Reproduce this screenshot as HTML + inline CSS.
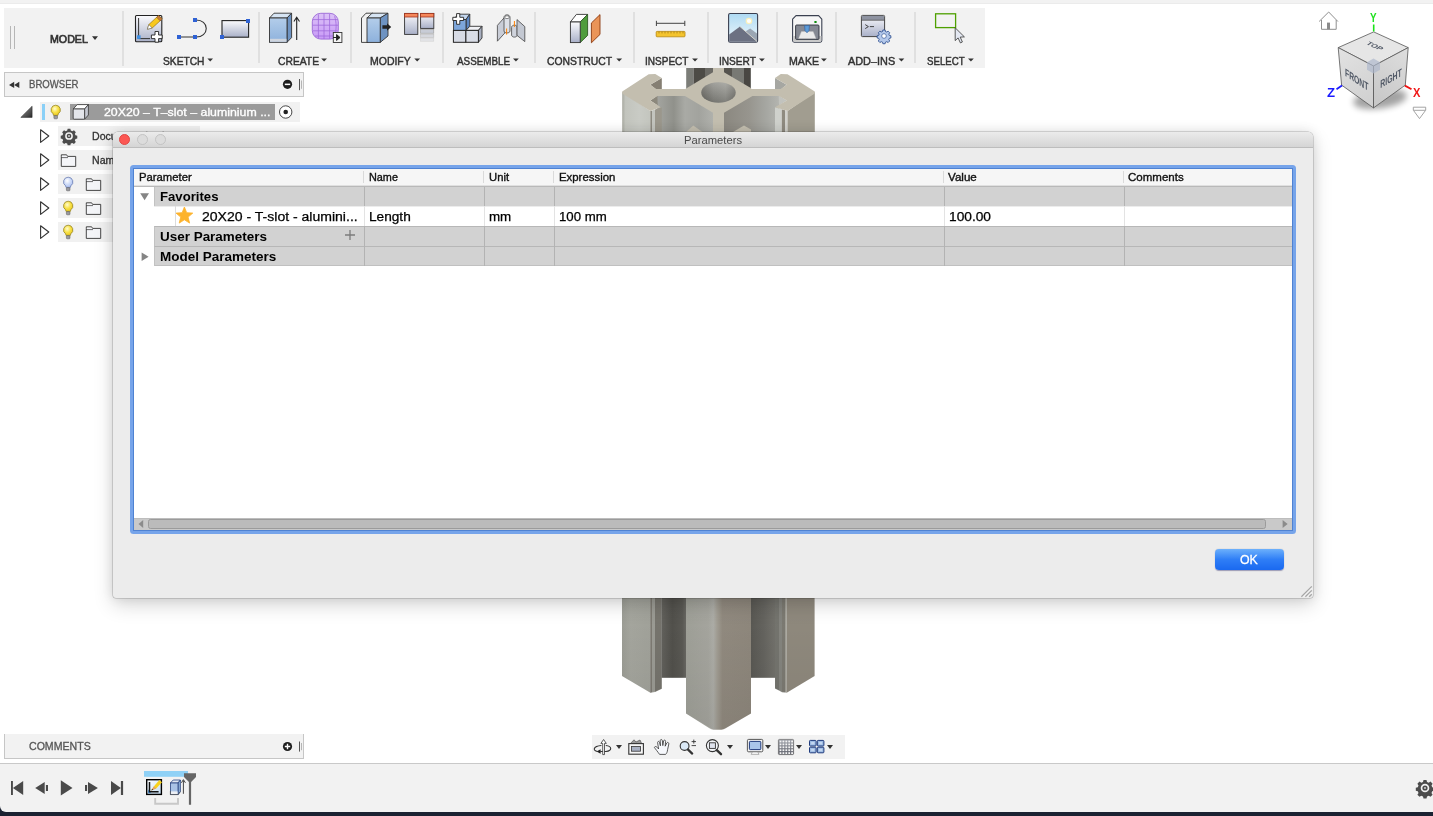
<!DOCTYPE html>
<html><head><meta charset="utf-8"><title>Parameters</title>
<style>
html,body{margin:0;padding:0;}
body{width:1433px;height:816px;position:relative;overflow:hidden;background:#fff;font-family:"Liberation Sans",sans-serif;}
.abs{position:absolute;}
.t{position:absolute;white-space:nowrap;line-height:1;transform-origin:0 0;}
#topstrip{left:0;top:0;width:1433px;height:3px;background:#f2f2f2;border-bottom:1px solid #ebebeb;}
#toolbar{left:4px;top:8px;width:981px;height:60px;background:#f2f2f2;}
.sep{position:absolute;top:12px;width:2px;height:51px;background:#e0e0e0;}
#brhead{left:4px;top:72px;width:298px;height:23px;background:#f2f2f2;border:1px solid #c6c6c6;}
.rowbg{position:absolute;background:#f1f1f1;}
#comments{left:4px;top:734px;width:298px;height:24px;background:#f2f2f2;border:1px solid #c6c6c6;border-top:none;}
#navbar{left:592px;top:735px;width:253px;height:24px;background:#f2f2f2;}
#timeline{left:0;top:763px;width:1433px;height:49px;background:#f2f2f2;border-top:1px solid #c9c9c9;border-bottom-left-radius:6px;box-sizing:border-box;}
#darkstrip{left:0;top:800px;width:1433px;height:16px;background:#1b2232;}
#dialog{left:113px;top:132px;width:1200px;height:466px;background:#ececec;border-radius:5px 5px 3px 3px;box-shadow:0 0 0 0.5px rgba(0,0,0,0.26),0 7px 20px rgba(0,0,0,0.16),0 0 12px rgba(0,0,0,0.10);overflow:hidden;}
#titlebar{left:0;top:0;width:1200px;height:15px;background:linear-gradient(#ebebeb,#d5d5d5);border-bottom:1px solid #bdbdbd;}
.tl{position:absolute;top:2px;width:10px;height:10px;border-radius:50%;box-sizing:border-box;}
#ring{left:17px;top:33px;width:1166px;height:369px;background:#76a4ea;border-radius:3.5px;}
#table{left:21px;top:37px;width:1158px;height:361px;background:#fff;box-shadow:0 0 0 1px #4f82d2;overflow:hidden;}
#thead{left:0;top:0;width:1158px;height:16px;background:#f6f6f6;}
.grow{position:absolute;left:20px;width:1138px;height:20px;background:#d2d2d2;border-top:1px solid #b7b7b7;border-left:1px solid #c2c2c2;box-sizing:border-box;}
.vl{position:absolute;width:1px;}
#ok{left:1102px;top:417px;width:69px;height:21px;border-radius:4px;background:linear-gradient(#6cb0fb,#2f7ef6 50%,#1a69f0);box-shadow:0 0.5px 1px rgba(0,0,80,0.35);}
</style></head><body>
<div class="abs" id="topstrip"></div>
<div class="abs" id="toolbar"></div>
<div class="sep" style="left:122px;top:11px;height:55px"></div>
<div class="sep" style="left:258px"></div>
<div class="sep" style="left:350px"></div>
<div class="sep" style="left:442px"></div>
<div class="sep" style="left:534px"></div>
<div class="sep" style="left:633px"></div>
<div class="sep" style="left:707px"></div>
<div class="sep" style="left:776px"></div>
<div class="sep" style="left:835px"></div>
<div class="sep" style="left:914px"></div>
<div class="abs" style="left:10px;top:26px;width:1px;height:23px;background:#b6b6b6"></div>
<div class="abs" style="left:14px;top:26px;width:1px;height:23px;background:#b6b6b6"></div>
<div class="abs" id="brhead"></div>
<div class="rowbg" style="left:40px;top:102px;width:260px;height:20px"></div>
<div class="abs" style="left:42px;top:104px;width:3px;height:16px;background:#8ad0f7"></div>
<div class="abs" style="left:70px;top:104px;width:205px;height:16px;background:#9b9b9b"></div>
<div class="rowbg" style="left:58px;top:126px;width:142px;height:20px"></div>
<div class="rowbg" style="left:58px;top:150px;width:142px;height:20px"></div>
<div class="rowbg" style="left:58px;top:174px;width:142px;height:20px"></div>
<div class="rowbg" style="left:58px;top:198px;width:142px;height:20px"></div>
<div class="rowbg" style="left:58px;top:222px;width:142px;height:20px"></div>
<div class="abs" id="comments"></div>
<div class="abs" id="navbar"></div>
<div class="abs" id="darkstrip"></div>
<div class="abs" id="timeline"></div>
<svg class="abs" style="left:0;top:0" width="1433" height="816" viewBox="0 0 1433 816">
<defs>
<linearGradient id="gLface" x1="622" x2="651" y1="0" y2="0" gradientUnits="userSpaceOnUse"><stop offset="0" stop-color="#a7a89f"/><stop offset="0.12" stop-color="#c2c4bd"/><stop offset="0.6" stop-color="#c9cbc5"/><stop offset="1" stop-color="#c3c5be"/></linearGradient>
<linearGradient id="gLcav" x1="657" x2="713" y1="0" y2="0" gradientUnits="userSpaceOnUse"><stop offset="0" stop-color="#a4a5a0"/><stop offset="0.3" stop-color="#90918b"/><stop offset="0.5" stop-color="#a9aaa5"/><stop offset="0.75" stop-color="#a2a39e"/><stop offset="1" stop-color="#b0b1ac"/></linearGradient>
<linearGradient id="gRcav" x1="724" x2="779.5" y1="0" y2="0" gradientUnits="userSpaceOnUse"><stop offset="0" stop-color="#8b8880"/><stop offset="0.45" stop-color="#97958e"/><stop offset="0.75" stop-color="#a5a6a1"/><stop offset="1" stop-color="#b4b5b0"/></linearGradient>
<linearGradient id="gHole" x1="701" x2="736" y1="0" y2="0" gradientUnits="userSpaceOnUse"><stop offset="0" stop-color="#6d6c66"/><stop offset="0.35" stop-color="#8e8e88"/><stop offset="0.7" stop-color="#9a9a94"/><stop offset="1" stop-color="#7a7973"/></linearGradient>
<linearGradient id="gHoleV" x1="0" x2="0" y1="82" y2="103" gradientUnits="userSpaceOnUse"><stop offset="0" stop-color="#fff" stop-opacity="0.18"/><stop offset="1" stop-color="#000" stop-opacity="0.18"/></linearGradient>
<linearGradient id="gCol" x1="686" x2="751" y1="0" y2="0" gradientUnits="userSpaceOnUse"><stop offset="0" stop-color="#a0a199"/><stop offset="0.34" stop-color="#a6a69f"/><stop offset="0.42" stop-color="#aeaea8"/><stop offset="0.48" stop-color="#a29e94"/><stop offset="0.56" stop-color="#928b80"/><stop offset="1" stop-color="#8f887d"/></linearGradient>
<linearGradient id="gLface2" x1="622" x2="651" y1="0" y2="0" gradientUnits="userSpaceOnUse"><stop offset="0" stop-color="#9d9e96"/><stop offset="0.3" stop-color="#a6a79f"/><stop offset="1" stop-color="#a2a39b"/></linearGradient>
<linearGradient id="gLcav2" x1="661" x2="686" y1="0" y2="0" gradientUnits="userSpaceOnUse"><stop offset="0" stop-color="#64635e"/><stop offset="0.45" stop-color="#52514c"/><stop offset="0.85" stop-color="#5a5954"/><stop offset="1" stop-color="#696863"/></linearGradient>
<linearGradient id="gRcav2" x1="751" x2="776" y1="0" y2="0" gradientUnits="userSpaceOnUse"><stop offset="0" stop-color="#5a5954"/><stop offset="0.5" stop-color="#65645f"/><stop offset="1" stop-color="#74736d"/></linearGradient>
<linearGradient id="gShade" x1="0" x2="0" y1="598" y2="730" gradientUnits="userSpaceOnUse"><stop offset="0" stop-color="#000" stop-opacity="0"/><stop offset="1" stop-color="#000" stop-opacity="0.07"/></linearGradient>
<linearGradient id="gCubeL" x1="1338" x2="1373" y1="47" y2="107" gradientUnits="userSpaceOnUse"><stop offset="0" stop-color="#e2e2e2"/><stop offset="1" stop-color="#cfcfcf"/></linearGradient>
<linearGradient id="gCubeR" x1="1408" x2="1373" y1="47" y2="107" gradientUnits="userSpaceOnUse"><stop offset="0" stop-color="#dedede"/><stop offset="1" stop-color="#c6c6c6"/></linearGradient>
<filter id="blur3" x="-50%" y="-50%" width="200%" height="200%"><feGaussianBlur stdDeviation="3.2"/></filter>
</defs>
<!-- ===== 3D model top part ===== -->
<g>
<!-- dark cavities behind hub -->
<rect x="686.2" y="68" width="7.3" height="22" fill="#7c7d78"/>
<rect x="693.5" y="68" width="11.5" height="22" fill="#4d4b46"/>
<rect x="705" y="68" width="8.5" height="22" fill="#6b6a65"/>
<rect x="723.5" y="68" width="8.5" height="22" fill="#55534e"/>
<rect x="732" y="68" width="12" height="22" fill="#787974"/>
<rect x="744" y="68" width="6.8" height="22" fill="#494743"/>
<!-- left face -->
<polygon points="622.2,92 650.3,111 650.3,133 622.2,133" fill="url(#gLface)"/>
<!-- left cavity -->
<rect x="657" y="95" width="56.5" height="38" fill="url(#gLcav)"/>
<!-- right cavity -->
<rect x="723.5" y="95" width="56" height="38" fill="url(#gRcav)"/>
<!-- lip strips left -->
<polygon points="650.3,111 652,110.4 652,133 650.3,133" fill="#8d8a80"/>
<polygon points="652,110.4 655,109.4 655,133 652,133" fill="#c3c4be"/>
<polygon points="655,109.4 660.8,107.3 661.8,107.8 661.8,133 655,133" fill="#9b978c"/>
<!-- right lip strips -->
<polygon points="775,107.3 781.8,109.3 781.8,133 775,133" fill="#cfd1cc"/>
<polygon points="781.8,109.3 785,110.3 785,133 781.8,133" fill="#8f8b80"/>
<polygon points="785,110.3 787.5,111 787.5,133 785,133" fill="#d2d2cd"/>
<!-- right face -->
<polygon points="787.5,111 814.8,92 814.8,133 787.5,133" fill="#a19d90"/>
<!-- notches -->
<polygon points="661.8,78.1 661.8,89.5 656.2,89.5 650.3,84.8" fill="#857f73"/>
<polygon points="650.3,100.6 657.4,95.5 657.7,105.5" fill="#8c887c"/>
<polygon points="775,78.1 775,89.5 780.8,89.5 786.7,84.8" fill="#a6a7a2"/>
<polygon points="778.7,95.5 786.7,100.6 779,105.5" fill="#c2c3be"/>
<!-- small lower lip tops -->
<polygon points="686,132 693.3,125.6 702.5,132" fill="#c3beaf"/>
<polygon points="733,132 744,125.6 751,129.5 751,132" fill="#c3beaf"/>
<!-- top face -->
<path fill="#c3beaf" fill-rule="evenodd" d="M622.2,91.4 L648.7,74.3 L655.3,73.9 L661.8,78.1 L650.3,84.8 L656.2,88.9 L685.3,88.9 L713,72.2 L713,68 L724,68 L724,72.2 L750.8,88.1 L751.5,88.9 L780.8,88.9 L786.7,84.8 L775,78.1 L780.8,73.9 L787.5,74.3 L814.8,91.4 L814.8,93.5 L787.5,111 L775,107.3 L786.7,100.6 L778.7,96 L752.5,96 L724,112.7 L724,133 L713,133 L713,112.7 L685,96 L657.4,96 L650.3,100.6 L660.8,107.3 L650.3,111 L622.2,93.5 Z"/>
<ellipse cx="718.5" cy="92.5" rx="17.2" ry="10.2" fill="url(#gHole)"/>
<ellipse cx="718.5" cy="92.5" rx="17.2" ry="10.2" fill="url(#gHoleV)"/>
</g>
<!-- ===== 3D model bottom part ===== -->
<g>
<polygon points="622,597 650.4,597 650.4,692.7 622,676" fill="url(#gLface2)"/>
<polygon points="650.2,597 652,597 652,692.5 650.2,692.7" fill="#7e7b73"/>
<polygon points="652,597 655,597 655,692 652,692.5" fill="#9c9c95"/>
<polygon points="655,597 661.8,597 661.8,688.8 655,692" fill="#77756e"/>
<rect x="661.6" y="597" width="24.6" height="80.8" fill="url(#gLcav2)"/>
<rect x="751" y="597" width="24.6" height="80.8" fill="url(#gRcav2)"/>
<path d="M686,597 H751 V713.6 L725.6,728.3 Q723.4,729.7 721.4,729.7 H713.4 Q711.4,729.7 709.4,728.3 L686,713.6 Z" fill="url(#gCol)"/>
<polygon points="775,597 779,597 779,690.6 775,688.4" fill="#75756f"/>
<polygon points="779,597 782,597 782,692.2 779,690.6" fill="#85857f"/>
<polygon points="782,597 785,597 785,692.6 782,692.2" fill="#7d7b73"/>
<polygon points="785,597 786.7,597 786.7,692.7 785,692.6" fill="#a09e95"/>
<polygon points="786.7,597 814.6,597 814.6,676 786.7,692.7" fill="#908a7e"/>
<polygon points="622,597 814.6,597 814.6,676 786.7,692.7 775.5,688.3 775.5,677.8 751,677.8 751,713.6 724,729.6 713,729.6 686,713.6 686,677.8 661.6,677.8 661.6,688.3 650.4,692.7 622,676" fill="url(#gShade)"/>
</g>
<!-- ===== View cube ===== -->
<g>
<ellipse cx="1380" cy="99" rx="27" ry="9.5" fill="#000" opacity="0.36" filter="url(#blur3)" transform="rotate(-8 1380 99)"/>
<polygon points="1373.7,31.9 1408.2,47.6 1373.5,66 1338.2,47.6" fill="#e6e6e6" stroke="#555" stroke-width="0.8" stroke-linejoin="round"/>
<polygon points="1338.2,47.6 1373.5,66 1373.5,107.9 1341.6,85.1" fill="url(#gCubeL)" stroke="#555" stroke-width="0.8" stroke-linejoin="round"/>
<polygon points="1373.5,66 1408.2,47.6 1405.3,85.1 1373.5,107.9" fill="url(#gCubeR)" stroke="#555" stroke-width="0.8" stroke-linejoin="round"/>
<polygon points="1373.5,58.5 1380,62.2 1380,69.8 1373.5,73.5 1367,69.8 1367,62.2" fill="#aeb8cc" opacity="0.7"/>
<g font-family="Liberation Sans, sans-serif" font-weight="bold" fill="#4a5260" opacity="0.96">
<text transform="translate(1365.5,44) rotate(24) skewX(-32) scale(1,0.72)" font-size="8">TOP</text>
<text transform="translate(1345,75.8) skewY(33) scale(0.62,1)" font-size="11">FRONT</text>
<text transform="translate(1380.3,88.3) skewY(-30) scale(0.63,1)" font-size="11">RIGHT</text>
</g>
<!-- axes -->
<line x1="1373.7" y1="24.5" x2="1373.7" y2="31.5" stroke="#19e219" stroke-width="1.6"/>
<line x1="1336.5" y1="89.3" x2="1342" y2="85.6" stroke="#1a1aff" stroke-width="1.8"/>
<line x1="1404.9" y1="85.6" x2="1411.5" y2="89.3" stroke="#f01010" stroke-width="1.8"/>
<!-- home -->
<path d="M1319.1,21.5 L1328.7,12 L1337.9,21.5 M1321.5,20 V29.3 H1336.2 V20" fill="none" stroke="#8e8e8e" stroke-width="1"/>
<rect x="1327" y="22.6" width="3" height="6.7" fill="#8a8a8a"/>
<!-- dropdown -->
<path d="M1413.3,107.2 H1425.7 V110.3 H1413.3 Z M1413.6,110.6 L1419.5,118.6 L1425.4,110.6" fill="#fff" stroke="#9a9a9a" stroke-width="0.9"/>
</g>
<defs>
<linearGradient id="gPanel" x1="0" x2="0" y1="0" y2="1"><stop offset="0" stop-color="#fbfbfd"/><stop offset="1" stop-color="#a9b0c8"/></linearGradient>
<linearGradient id="gSky" x1="0" x2="0" y1="0" y2="1"><stop offset="0" stop-color="#aedaf3"/><stop offset="1" stop-color="#f0f8fc"/></linearGradient>
<linearGradient id="gForm" x1="0" x2="0" y1="0" y2="1"><stop offset="0" stop-color="#dcc2f7"/><stop offset="1" stop-color="#c89af7"/></linearGradient>
<linearGradient id="gBlueF" x1="0" x2="0" y1="0" y2="1"><stop offset="0" stop-color="#b3cdea"/><stop offset="1" stop-color="#8db1dc"/></linearGradient>
<linearGradient id="gTri" x1="0" x2="1" y1="0" y2="1"><stop offset="0" stop-color="#9a9a9a"/><stop offset="1" stop-color="#2a2a2a"/></linearGradient>
<radialGradient id="gBulbY" cx="0.4" cy="0.35" r="0.7"><stop offset="0" stop-color="#fffbd0"/><stop offset="0.5" stop-color="#f8e24a"/><stop offset="1" stop-color="#e8c51a"/></radialGradient>
<radialGradient id="gBulbB" cx="0.4" cy="0.35" r="0.7"><stop offset="0" stop-color="#ffffff"/><stop offset="0.5" stop-color="#cfdcf8"/><stop offset="1" stop-color="#a9bdf0"/></radialGradient>
</defs>
<!-- dropdown arrows -->
<g fill="#333">
<polygon points="92,36.2 98,36.2 95,40"/>
<polygon points="207.4,58.4 213,58.4 210.2,61.6"/>
<polygon points="321.2,58.4 327,58.4 324.1,61.6"/>
<polygon points="414.3,58.4 420.1,58.4 417.2,61.6"/>
<polygon points="513,58.4 518.8,58.4 515.9,61.6"/>
<polygon points="616.3,58.4 622.1,58.4 619.2,61.6"/>
<polygon points="692.1,58.4 697.9,58.4 695,61.6"/>
<polygon points="759,58.4 764.8,58.4 761.9,61.6"/>
<polygon points="821,58.4 826.8,58.4 823.9,61.6"/>
<polygon points="898.5,58.4 904.3,58.4 901.4,61.6"/>
<polygon points="968,58.4 973.8,58.4 970.9,61.6"/>
</g>
<!-- SKETCH: create sketch -->
<rect x="135.5" y="15.5" width="26.3" height="26.3" rx="1" fill="url(#gPanel)" stroke="#222" stroke-width="1.1"/>
<path d="M138.6,18 V38.6 H150" fill="none" stroke="#333" stroke-width="1"/>
<rect x="137" y="35.3" width="3.6" height="3.6" fill="#3f8fe2"/>
<path d="M147.4,29.2 L148.8,24.6 L158.6,15.4 L162.2,19 L152.2,28 Z" fill="#f7c81e" stroke="#8a6512" stroke-width="0.6"/>
<path d="M156.6,17.3 L158.6,15.4 L162.2,19 L160.2,20.9 Z" fill="#c47a3c" stroke="#7a4a1c" stroke-width="0.5"/>
<path d="M147.4,29.2 L148.8,24.6 L152.2,28 Z" fill="#fff" stroke="#555" stroke-width="0.5"/>
<path d="M155,31.5 H158.6 V35 H162.2 V38.6 H158.6 V42.2 H155 V38.6 H151.4 V35 H155 Z" fill="#fff" stroke="#222" stroke-width="0.9"/>
<!-- arc -->
<path d="M179,37 H195 M195,20 C210,19 210,38 195,37" fill="none" stroke="#333" stroke-width="1.1"/>
<rect x="177" y="35" width="4" height="4" fill="#2f62d4"/><rect x="193" y="35" width="4" height="4" fill="#2f62d4"/><rect x="193" y="18" width="4" height="4" fill="#2f62d4"/>
<!-- rectangle -->
<rect x="222" y="20.6" width="26.6" height="16.6" fill="url(#gPanel)" stroke="#222" stroke-width="1.1"/>
<rect x="246" y="19" width="4" height="4" fill="#2f62d4"/><rect x="220" y="35" width="4" height="4" fill="#2f62d4"/>
<!-- CREATE: extrude -->
<polygon points="269.5,18 274,13.2 291.6,13.2 287,18" fill="#d6e4f3" stroke="#333" stroke-width="0.9" stroke-linejoin="round"/>
<polygon points="287,18 291.6,13.2 291.6,37.6 287,42.3" fill="#6e93c2" stroke="#333" stroke-width="0.9" stroke-linejoin="round"/>
<rect x="269.5" y="18" width="17.5" height="24.3" fill="url(#gBlueF)" stroke="#333" stroke-width="0.9"/>
<rect x="270" y="38.8" width="16.5" height="3" fill="#cfd5df"/>
<path d="M296.7,40 V18 M293.9,21.5 L296.7,17.3 L299.5,21.5" fill="none" stroke="#222" stroke-width="1.1"/>
<!-- form -->
<rect x="312.3" y="13.3" width="26" height="25.8" rx="8.5" fill="url(#gForm)" stroke="#9a68d6" stroke-width="0.9"/>
<path d="M312.8,19.6 H337.8 M312.6,25.2 H338 M312.8,30.8 H337.8 M315,36 H335.6 M318.4,14.4 V38.4 M324,13.6 V39 M329.6,13.8 V38.8 M334.6,16.2 C336.6,22 336.6,30 334.6,36.6" stroke="#a06adc" stroke-width="0.8" fill="none"/>
<rect x="333.3" y="32.5" width="8.6" height="10" fill="#f4f4f4" stroke="#333" stroke-width="0.9"/>
<path d="M333,37.5 H338 M336.6,34.6 L340,37.5 L336.6,40.4 Z" fill="#222" stroke="#222" stroke-width="1"/>
<!-- MODIFY 1 press pull -->
<polygon points="361.5,18 366,13.2 373,13.2 368,18 368,42.4 361.5,42.4" fill="#f1f1f1" stroke="#333" stroke-width="0.9" stroke-linejoin="round"/>
<polygon points="367,18 372,13.2 388,13.2 380.2,18" fill="#d6e4f3" stroke="#333" stroke-width="0.9" stroke-linejoin="round"/>
<polygon points="380.2,18 388,13.2 388,36 380.2,42.4" fill="#6e93c2" stroke="#333" stroke-width="0.9" stroke-linejoin="round"/>
<rect x="367" y="18" width="13.2" height="24.4" fill="url(#gBlueF)" stroke="#333" stroke-width="0.9"/>
<path d="M382.4,25.2 H387 V23.2 L391.2,27 L387,30.8 V28.8 H382.4 Z" fill="#222"/>
<!-- MODIFY 2 -->
<rect x="404.6" y="13.4" width="13.2" height="21" fill="url(#gPanel)" stroke="#333" stroke-width="0.9"/>
<rect x="404.6" y="13.4" width="13.2" height="3.6" fill="#f5875a" stroke="#a3321c" stroke-width="0.8"/>
<rect x="420.6" y="13.4" width="13.2" height="15" fill="url(#gPanel)" stroke="#333" stroke-width="0.9"/>
<rect x="420.6" y="13.4" width="13.2" height="3.6" fill="#f5875a" stroke="#a3321c" stroke-width="0.8"/>
<rect x="420.6" y="29.6" width="13.2" height="3.6" fill="#c8ccd6" stroke="#999" stroke-width="0.6"/>
<rect x="420.6" y="34.2" width="13.2" height="3.2" fill="#d6d8de" stroke="#bbb" stroke-width="0.6"/>
<rect x="420.6" y="38.2" width="13.2" height="3" fill="#e2e3e6" stroke="#d0d0d0" stroke-width="0.5"/>
<!-- ASSEMBLE 1 -->
<polygon points="453.6,19.5 458,14.2 469.8,14.2 466,19.5" fill="#c3d6ee" stroke="#333" stroke-width="0.9" stroke-linejoin="round"/>
<polygon points="466,19.5 469.8,14.2 469.8,26 466,30.4" fill="#5c86c2" stroke="#333" stroke-width="0.9" stroke-linejoin="round"/>
<rect x="453.6" y="19.5" width="12.4" height="10.9" fill="#7da6db" stroke="#333" stroke-width="0.9"/>
<polygon points="466,30.4 469.8,26.3 482,26.3 478.4,30.4" fill="#f0f1f5" stroke="#333" stroke-width="0.9" stroke-linejoin="round"/>
<polygon points="478.4,30.4 482,26.3 482,38 478.4,42.3" fill="#a8afc0" stroke="#333" stroke-width="0.9" stroke-linejoin="round"/>
<rect x="453.4" y="30.4" width="12.5" height="11.9" fill="#d7dbe5" stroke="#222" stroke-width="1"/>
<rect x="465.9" y="30.4" width="12.5" height="11.9" fill="#d9dde7" stroke="#222" stroke-width="1"/>
<path d="M456.6,13.6 H459.8 V17.3 H463.6 V20.5 H459.8 V24.3 H456.6 V20.5 H452.8 V17.3 H456.6 Z" fill="#fff" stroke="#222" stroke-width="0.9"/>
<!-- ASSEMBLE 2 joint -->
<polygon points="497.4,25.4 504.8,17 504.8,33 497.4,41.2" fill="#c9cdd7" stroke="#444" stroke-width="0.8" stroke-linejoin="round"/>
<path d="M504,17.4 C504,14 510,14 510,17.4 V31 C510,33.6 504,33.6 504,31 Z" fill="#dde0e7" stroke="#444" stroke-width="0.8"/>
<ellipse cx="507" cy="17.2" rx="2.2" ry="1.4" fill="#fff" stroke="#444" stroke-width="0.6"/>
<path d="M511.6,27.4 C511.6,24.4 517.2,24.4 517.2,27.4 V35 C517.2,37.8 511.6,37.8 511.6,35 Z" fill="#cfd3dc" stroke="#444" stroke-width="0.8"/>
<polygon points="517,19.6 524.8,26.6 524.8,41.6 517,35.4" fill="#c3c8d2" stroke="#444" stroke-width="0.8" stroke-linejoin="round"/>
<path d="M506.6,28.5 V34.6 M514.4,21 V27" stroke="#ff8000" stroke-width="1"/>
<!-- CONSTRUCT -->
<polygon points="570.4,22 576.4,14.4 587.6,14.4 580.2,22" fill="#fff" stroke="#333" stroke-width="0.9" stroke-linejoin="round"/>
<polygon points="580.2,22 587.6,14.4 587.6,35.4 580.2,42.6" fill="#4f9c3d" stroke="#2c5a22" stroke-width="0.9" stroke-linejoin="round"/>
<rect x="570.4" y="22" width="9.8" height="20.6" fill="url(#gPanel)" stroke="#333" stroke-width="0.9"/>
<polygon points="591.4,23 600,14.6 600,34.4 591.4,42.8" fill="#ea9458" stroke="#8c3a10" stroke-width="0.9" stroke-linejoin="round"/>
<!-- INSPECT -->
<path d="M656.4,23.3 H684.8 M656.4,20.8 V26 M684.8,20.8 V26" stroke="#444" stroke-width="1" fill="none"/>
<rect x="656.2" y="31.4" width="28.8" height="5.4" rx="0.8" fill="#f4c42e" stroke="#b8870c" stroke-width="0.8"/>
<path d="M659,31.6 V33.4 M662,31.6 V33.4 M665,31.6 V33.4 M668,31.6 V33.4 M671,31.6 V33.4 M674,31.6 V33.4 M677,31.6 V33.4 M680,31.6 V33.4 M683,31.6 V33.4" stroke="#8a6408" stroke-width="0.6"/>
<!-- INSERT -->
<rect x="728.6" y="13.5" width="29" height="28.8" rx="1.5" fill="url(#gSky)" stroke="#3a3f50" stroke-width="1.1"/>
<polygon points="743,33 750.2,28.4 757,33.6 757,41.6 750,41.6" fill="#9ba6b3"/>
<polygon points="729.2,41.8 729.2,34.6 740,26.6 757,41.4 757,41.8" fill="#6c7182"/>
<path d="M740,26.6 L757,41.4" stroke="#e8e4d8" stroke-width="0.8"/>
<circle cx="749" cy="21" r="3.3" fill="#fbf1bd"/><circle cx="749" cy="21" r="2.1" fill="#fff"/>
<!-- MAKE -->
<path d="M796,15.6 H818.6 L821.8,19.2 V40.6 Q821.8,42.2 820.2,42.2 H794.2 Q792.6,42.2 792.6,40.6 V19.2 Z" fill="#f6f6f6" stroke="#3a4050" stroke-width="1.1" stroke-linejoin="round"/>
<path d="M793,36 V40.6 Q793,41.8 794.2,41.8 H820.2 Q821.4,41.8 821.4,40.6 V36 Z" fill="#c9c9c9"/>
<rect x="795.6" y="25" width="23.4" height="14.4" rx="1" fill="#858993" stroke="#2e323c" stroke-width="0.9"/>
<polygon points="798.6,38.6 801.4,31.6 813.2,31.6 816,38.6" fill="#ebebeb" stroke="#bbb" stroke-width="0.4"/>
<polygon points="804.6,25.6 809.4,25.6 809,30.6 807,32.8 805,30.6" fill="#5c9bd8" stroke="#2c5c9c" stroke-width="0.6"/>
<rect x="814.4" y="21" width="2.2" height="2" fill="#0a8c0a"/>
<!-- ADD-INS -->
<rect x="861.4" y="15.4" width="23.2" height="21.2" rx="1" fill="url(#gPanel)" stroke="#444" stroke-width="1"/>
<rect x="861.9" y="15.9" width="22.2" height="4" fill="#8e93a1"/>
<path d="M861.4,20.2 H884.6" stroke="#444" stroke-width="0.8"/>
<path d="M865.2,24.6 L868.4,26.6 L865.2,28.6 M869.8,26.6 H874" stroke="#333" stroke-width="0.9" fill="none"/>
<g transform="translate(884,36) scale(0.86)">
<path d="M-1.3,-7 h2.6 l0.4,1.8 l1.5,0.6 l1.6,-1 l1.8,1.8 l-1,1.6 l0.6,1.5 l1.8,0.4 v2.6 l-1.8,0.4 l-0.6,1.5 l1,1.6 l-1.8,1.8 l-1.6,-1 l-1.5,0.6 l-0.4,1.8 h-2.6 l-0.4,-1.8 l-1.5,-0.6 l-1.6,1 l-1.8,-1.8 l1,-1.6 l-0.6,-1.5 l-1.8,-0.4 v-2.6 l1.8,-0.4 l0.6,-1.5 l-1,-1.6 l1.8,-1.8 l1.6,1 l1.5,-0.6 Z" fill="#b4c8ea" stroke="#274a8c" stroke-width="0.95" stroke-linejoin="round"/>
<circle r="2.7" fill="#fff" stroke="#274a8c" stroke-width="0.7"/>
</g>
<!-- SELECT -->
<rect x="935.6" y="13.8" width="20" height="13.8" fill="none" stroke="#4ea000" stroke-width="1.3"/>
<path d="M955.2,27.8 L955.2,40.6 L958.1,37.9 L960.4,42.9 L962.4,42 L960.2,37.1 L964.4,36.9 Z" fill="#e4e8f2" stroke="#333" stroke-width="0.8" stroke-linejoin="round"/>
<!-- BROWSER header icons -->
<polygon points="9,84.9 14.2,81.7 14.2,88.1" fill="#333"/><polygon points="14.1,84.9 19.3,81.7 19.3,88.1" fill="#333"/>
<circle cx="287.5" cy="84.3" r="4.6" fill="#1e1e1e"/><rect x="284.8" y="83.6" width="5.4" height="1.5" fill="#fff"/>
<path d="M299.5,79 V90.2" stroke="#555" stroke-width="1"/><path d="M301.5,80.5 V88.8" stroke="#b5b5b5" stroke-width="1"/>
<!-- COMMENTS icons -->
<circle cx="287.5" cy="746.5" r="4.6" fill="#1e1e1e"/><path d="M284.8,746.5 H290.2 M287.5,743.8 V749.2" stroke="#fff" stroke-width="1.4"/>
<path d="M299.5,741.5 V751.6" stroke="#555" stroke-width="1"/><path d="M301.5,743 V750.2" stroke="#b5b5b5" stroke-width="1"/>
<!-- root row -->
<polygon points="20.8,117.4 32.1,117.4 32.1,106.2" fill="url(#gTri)" stroke="#222" stroke-width="0.5"/>
<g id="bulbY"><path d="M55.7,105.2 a4.7,4.7 0 0 1 2.6,8.6 l-0.4,1.6 h-4.4 l-0.4,-1.6 a4.7,4.7 0 0 1 2.6,-8.6 Z" fill="url(#gBulbY)" stroke="#8b7a1e" stroke-width="0.7"/><rect x="53.9" y="115.6" width="3.6" height="3.2" rx="0.8" fill="#9a9aa0" stroke="#555" stroke-width="0.5"/></g>
<polygon points="73.2,109 77.2,104.6 88.4,104.6 84.6,109" fill="#fff" stroke="#333" stroke-width="0.8" stroke-linejoin="round"/>
<polygon points="84.6,109 88.4,104.6 88.4,115 84.6,119.2" fill="#c6c9d2" stroke="#333" stroke-width="0.8" stroke-linejoin="round"/>
<rect x="73.2" y="109" width="11.4" height="10.2" rx="1" fill="#e3e5ea" stroke="#333" stroke-width="0.8"/>
<circle cx="285.7" cy="112" r="6.2" fill="#fff" stroke="#333" stroke-width="0.9"/><circle cx="285.7" cy="112" r="2.3" fill="#222"/>
<!-- child expand triangles -->
<g fill="#fff" stroke="#333" stroke-width="1.1" stroke-linejoin="round">
<polygon points="40.6,129.8 48.8,136 40.6,142.4"/>
<polygon points="40.6,153.8 48.8,160 40.6,166.4"/>
<polygon points="40.6,177.8 48.8,184 40.6,190.4"/>
<polygon points="40.6,201.8 48.8,208 40.6,214.4"/>
<polygon points="40.6,225.8 48.8,232 40.6,238.4"/>
</g>
<!-- gear doc settings -->
<g transform="translate(69,136) scale(0.9)">
<path d="M-1.5,-8 h3 l0.5,2 l1.7,0.7 l1.8,-1.1 l2.1,2.1 l-1.1,1.8 l0.7,1.7 l2,0.5 v3 l-2,0.5 l-0.7,1.7 l1.1,1.8 l-2.1,2.1 l-1.8,-1.1 l-1.7,0.7 l-0.5,2 h-3 l-0.5,-2 l-1.7,-0.7 l-1.8,1.1 l-2.1,-2.1 l1.1,-1.8 l-0.7,-1.7 l-2,-0.5 v-3 l2,-0.5 l0.7,-1.7 l-1.1,-1.8 l2.1,-2.1 l1.8,1.1 l1.7,-0.7 Z" fill="#4c4c4c"/>
<circle r="4.3" fill="#f1f1f1"/><circle r="2.6" fill="#4c4c4c"/><circle r="1.1" fill="#c8c8c8"/>
</g>
<!-- folders -->
<g id="fold1"><path d="M61.3,156.4 V166.4 H75.7 V156.4 H67.6 L66.6,154.8 H61.3 Z" fill="#f4f5f8" stroke="#333" stroke-width="0.9" stroke-linejoin="round"/><path d="M61.3,157.6 H68" stroke="#333" stroke-width="0.7"/></g>
<use href="#fold1" x="25" y="24"/>
<use href="#fold1" x="25" y="48"/>
<use href="#fold1" x="25" y="72"/>
<!-- bulbs -->
<g transform="translate(12.5,72)"><path d="M55.7,105.2 a4.7,4.7 0 0 1 2.6,8.6 l-0.4,1.6 h-4.4 l-0.4,-1.6 a4.7,4.7 0 0 1 2.6,-8.6 Z" fill="url(#gBulbB)" stroke="#5a6fa8" stroke-width="0.7"/><rect x="53.9" y="115.6" width="3.6" height="3.2" rx="0.8" fill="#9a9aa0" stroke="#555" stroke-width="0.5"/></g>
<use href="#bulbY" x="12.5" y="96"/>
<use href="#bulbY" x="12.5" y="120"/>
<!-- NAV bar icons -->
<g stroke="#333" fill="none" stroke-width="1.1">
<path d="M601.4,745.5 C592.6,746.2 592.8,750.8 597.4,751.5 M605.8,745.5 C612.2,746.2 612.4,750.6 606,751.5 H600.4"/>
<polygon points="596.6,751.5 600.6,749.3 600.6,753.7" fill="#222" stroke="none"/>
<path d="M602.7,754.6 V743.4 H600.9 L603.6,739.5 L606.3,743.4 H604.5 V754.6 Z" fill="#fff" stroke-width="0.8"/>
</g>
<g fill="#333"><polygon points="616,745 622,745 619,748.9"/><polygon points="727,745 733,745 730,748.9"/><polygon points="765,745 771,745 768,748.9"/><polygon points="796,745 802,745 799,748.9"/><polygon points="827,745 833,745 830,748.9"/></g>
<path d="M630.5,743.4 L634,739.8 L636,742 L640,740 L641.6,743.4" fill="#999" stroke="#555" stroke-width="0.7"/>
<rect x="628.8" y="743.6" width="14.6" height="10.6" fill="#f6f6f6" stroke="#333" stroke-width="1.1"/>
<rect x="631.6" y="746.6" width="9" height="4.6" fill="#a8b0c2" stroke="#333" stroke-width="0.8"/>
<path d="M659.6,754.4 C657.6,751.6 655.4,749 654.4,747.4 C654.8,746.2 656.2,746.4 657,747.2 L658.6,749 L657.6,742.6 C657.4,741.2 659.2,741 659.6,742.4 L660.4,745.8 L660.2,740.6 C660.2,739.2 662.2,739.2 662.4,740.6 L662.8,745.6 L663.6,741 C663.8,739.6 665.8,740 665.6,741.4 L665.2,746.2 L666.8,743 C667.4,741.8 669.2,742.6 668.8,744 L667.6,749.6 C667.4,752 666.6,753.4 665.6,754.4 Z" fill="#f6f8fc" stroke="#333" stroke-width="0.8" stroke-linejoin="round"/>
<circle cx="684.6" cy="746" r="4.4" fill="#dbe9f6" stroke="#333" stroke-width="1.1"/>
<path d="M687.8,749.4 L692.2,753.6" stroke="#333" stroke-width="2.2" stroke-linecap="round"/>
<path d="M691.6,741.6 H696 M693.8,739.6 V743.6 M691.6,745.6 H696" stroke="#333" stroke-width="0.9"/>
<circle cx="712.4" cy="745.6" r="6" fill="#f4f6fa" stroke="#333" stroke-width="1.1"/>
<rect x="709.4" y="742.8" width="6" height="5.6" fill="#dfe3ee" stroke="#333" stroke-width="0.9"/>
<path d="M716.8,750.2 L721,754.2" stroke="#333" stroke-width="2.4" stroke-linecap="round"/>
<rect x="747.4" y="739.4" width="15.4" height="12.4" rx="1.2" fill="#f4f4f4" stroke="#444" stroke-width="0.9"/>
<rect x="749.4" y="741.4" width="11.4" height="8.2" rx="0.8" fill="#a9c5ea" stroke="#1f3a7c" stroke-width="1"/>
<path d="M752.4,752 H757.8 L759,754.4 H751.2 Z" fill="#f8f8f8" stroke="#888" stroke-width="0.6"/>
<linearGradient id="gGrid" x1="0" x2="0" y1="0" y2="1"><stop offset="0" stop-color="#a2a5ad"/><stop offset="1" stop-color="#5b5e68"/></linearGradient><rect x="778.4" y="739.4" width="15.2" height="15.2" rx="1" fill="url(#gGrid)" stroke="#555" stroke-width="0.6"/>
<g fill="#f4f4f4"><rect x="779.6" y="740.6" width="1.8" height="1.8"/><rect x="782.5" y="740.6" width="1.8" height="1.8"/><rect x="785.4" y="740.6" width="1.8" height="1.8"/><rect x="788.3" y="740.6" width="1.8" height="1.8"/><rect x="791.2" y="740.6" width="1.8" height="1.8"/>
<rect x="779.6" y="743.5" width="1.8" height="1.8"/><rect x="782.5" y="743.5" width="1.8" height="1.8"/><rect x="785.4" y="743.5" width="1.8" height="1.8"/><rect x="788.3" y="743.5" width="1.8" height="1.8"/><rect x="791.2" y="743.5" width="1.8" height="1.8"/>
<rect x="779.6" y="746.4" width="1.8" height="1.8"/><rect x="782.5" y="746.4" width="1.8" height="1.8"/><rect x="785.4" y="746.4" width="1.8" height="1.8"/><rect x="788.3" y="746.4" width="1.8" height="1.8"/><rect x="791.2" y="746.4" width="1.8" height="1.8"/>
<rect x="779.6" y="749.3" width="1.8" height="1.8"/><rect x="782.5" y="749.3" width="1.8" height="1.8"/><rect x="785.4" y="749.3" width="1.8" height="1.8"/><rect x="788.3" y="749.3" width="1.8" height="1.8"/><rect x="791.2" y="749.3" width="1.8" height="1.8"/>
<rect x="779.6" y="752.2" width="1.8" height="1.8"/><rect x="782.5" y="752.2" width="1.8" height="1.8"/><rect x="785.4" y="752.2" width="1.8" height="1.8"/><rect x="788.3" y="752.2" width="1.8" height="1.8"/><rect x="791.2" y="752.2" width="1.8" height="1.8"/></g>
<g fill="#9dbbe3" stroke="#1f3a7c" stroke-width="1"><rect x="809.5" y="740.4" width="6.6" height="5.6" rx="0.8"/><rect x="817.3" y="740.4" width="6.6" height="5.6" rx="0.8"/><rect x="809.5" y="747.2" width="6.6" height="5.6" rx="0.8"/><rect x="817.3" y="747.2" width="6.6" height="5.6" rx="0.8"/></g>
<g fill="#c3d6f0"><rect x="811.2" y="742" width="3.2" height="2.4"/><rect x="819" y="742" width="3.2" height="2.4"/><rect x="811.2" y="748.8" width="3.2" height="2.4"/><rect x="819" y="748.8" width="3.2" height="2.4"/></g>
<!-- TIMELINE -->
<g fill="#4a4a4a">
<rect x="11" y="781" width="1.9" height="14"/><polygon points="12.9,788 23.2,781 23.2,795"/>
<polygon points="35.2,788 44.7,782 44.7,794"/><rect x="45.9" y="785" width="2.1" height="6"/>
<polygon points="60.8,780.2 72.5,788 60.8,795.6"/>
<rect x="85" y="785" width="2.1" height="6"/><polygon points="88,782 97.9,788 88,794"/>
<polygon points="111,781 120.9,788 111,795"/><rect x="120.9" y="781" width="2.2" height="14"/>
</g>
<rect x="144" y="771" width="44" height="5.8" fill="#8fd1f6"/>
<linearGradient id="gSk" x1="0" x2="1" y1="0" y2="1"><stop offset="0" stop-color="#ffffff"/><stop offset="1" stop-color="#c4dcf2"/></linearGradient>
<rect x="146.7" y="779.7" width="14.7" height="14.7" fill="url(#gSk)" stroke="#000" stroke-width="1.4"/>
<polygon points="148,789.4 151.4,793.2 148,793.2" fill="#4f96dc"/>
<path d="M149.5,782 V791.7 H158.6" fill="none" stroke="#111" stroke-width="1.5"/>
<path d="M151.2,790.6 L153.8,786.4 L159.4,779.9 L162,782.2 L156.2,788.4 Z" fill="#f9d21c"/>
<path d="M151.2,790.6 L153.8,786.4 L156.2,788.4 Z" fill="#e0a070"/>
<path d="M151.2,790.6 L152.2,788.9 L153.2,789.8 Z" fill="#222"/>
<polygon points="170.4,783 173.2,780 180.4,780 178,783" fill="#dfe8f4" stroke="#2a4580" stroke-width="0.8" stroke-linejoin="round"/>
<polygon points="178,783 180.4,780 180.4,791.6 178,794.6" fill="#8eaed8" stroke="#2a4580" stroke-width="0.8" stroke-linejoin="round"/>
<rect x="170.4" y="783" width="7.6" height="11.6" fill="#a9c3e6" stroke="#2a4580" stroke-width="0.8"/>
<rect x="170.8" y="791.4" width="6.8" height="2.8" fill="#eceff4"/>
<path d="M170.4,791 V794.6 H178 L180.4,791.6" fill="none" stroke="#555" stroke-width="0.8"/>
<path d="M183.4,793.8 V780.4 M181.4,782.8 L183.4,779.6 L185.4,782.8" fill="none" stroke="#444" stroke-width="1"/>
<path d="M155.2,798 V803.8 H178 V798" fill="none" stroke="#c8c8c8" stroke-width="1.9"/>
<path d="M184,773.2 H196 V777 L191.1,782 V804.7 H188.9 V782 L184,777 Z" fill="#666"/>
<!-- settings gear -->
<g transform="translate(1425,788)">
<path d="M-1.5,-8 h3 l0.5,2 l1.7,0.7 l1.8,-1.1 l2.1,2.1 l-1.1,1.8 l0.7,1.7 l2,0.5 v3 l-2,0.5 l-0.7,1.7 l1.1,1.8 l-2.1,2.1 l-1.8,-1.1 l-1.7,0.7 l-0.5,2 h-3 l-0.5,-2 l-1.7,-0.7 l-1.8,1.1 l-2.1,-2.1 l1.1,-1.8 l-0.7,-1.7 l-2,-0.5 v-3 l2,-0.5 l0.7,-1.7 l-1.1,-1.8 l2.1,-2.1 l1.8,1.1 l1.7,-0.7 Z" fill="#4c4c4c"/>
<circle r="4.3" fill="#f2f2f2"/><circle r="2.6" fill="#4c4c4c"/><circle r="1.1" fill="#c8c8c8"/>
</g>
</svg>
<span class="t" style="left:49.60px;top:33.69px;font-size:11px;font-weight:normal;color:#333;transform:scaleX(0.9667);-webkit-text-stroke:0.7px #333">MODEL</span>
<span class="t" style="left:163.00px;top:55.69px;font-size:11px;font-weight:normal;color:#333;transform:scaleX(0.9290);-webkit-text-stroke:0.45px #333">SKETCH</span>
<span class="t" style="left:277.70px;top:55.69px;font-size:11px;font-weight:normal;color:#333;transform:scaleX(0.9364);-webkit-text-stroke:0.45px #333">CREATE</span>
<span class="t" style="left:369.60px;top:55.69px;font-size:11px;font-weight:normal;color:#333;transform:scaleX(0.9531);-webkit-text-stroke:0.45px #333">MODIFY</span>
<span class="t" style="left:457.00px;top:55.69px;font-size:11px;font-weight:normal;color:#333;transform:scaleX(0.8954);-webkit-text-stroke:0.45px #333">ASSEMBLE</span>
<span class="t" style="left:547.00px;top:55.69px;font-size:11px;font-weight:normal;color:#333;transform:scaleX(0.9419);-webkit-text-stroke:0.45px #333">CONSTRUCT</span>
<span class="t" style="left:644.89px;top:55.69px;font-size:11px;font-weight:normal;color:#333;transform:scaleX(0.9115);-webkit-text-stroke:0.45px #333">INSPECT</span>
<span class="t" style="left:718.58px;top:55.69px;font-size:11px;font-weight:normal;color:#333;transform:scaleX(0.9183);-webkit-text-stroke:0.45px #333">INSERT</span>
<span class="t" style="left:788.80px;top:55.69px;font-size:11px;font-weight:normal;color:#333;transform:scaleX(0.9631);-webkit-text-stroke:0.45px #333">MAKE</span>
<span class="t" style="left:847.80px;top:55.69px;font-size:11px;font-weight:normal;color:#333;transform:scaleX(0.9885);-webkit-text-stroke:0.45px #333">ADD–INS</span>
<span class="t" style="left:926.80px;top:55.69px;font-size:11px;font-weight:normal;color:#333;transform:scaleX(0.8822);-webkit-text-stroke:0.45px #333">SELECT</span>
<span class="t" style="left:29.40px;top:78.69px;font-size:11px;font-weight:normal;color:#555;transform:scaleX(0.8718);-webkit-text-stroke:0.3px #555">BROWSER</span>
<span class="t" style="left:29.30px;top:740.79px;font-size:11px;font-weight:normal;color:#555;transform:scaleX(0.9620);-webkit-text-stroke:0.3px #555">COMMENTS</span>
<span class="t" style="left:103.80px;top:107.03px;font-size:10.6px;font-weight:normal;color:#fff;transform:scaleX(1.1650);-webkit-text-stroke:0.3px #fff">20X20 – T–slot – aluminium ...</span>
<span class="t" style="left:91.60px;top:130.93px;font-size:10.6px;font-weight:normal;color:#333;transform:scaleX(1.0001);-webkit-text-stroke:0.3px #333">Document Settings</span>
<span class="t" style="left:91.60px;top:154.73px;font-size:10.6px;font-weight:normal;color:#333;transform:scaleX(1.0001);-webkit-text-stroke:0.3px #333">Named Views</span>
<span class="t" style="left:1370.30px;top:11.17px;font-size:13.5px;font-weight:bold;color:#1fe01f;transform:scaleX(0.7333);">Y</span>
<span class="t" style="left:1326.50px;top:86.17px;font-size:13.5px;font-weight:bold;color:#1a1aff;transform:scaleX(0.9750);">Z</span>
<span class="t" style="left:1412.60px;top:86.17px;font-size:13.5px;font-weight:bold;color:#f01818;transform:scaleX(0.8222);">X</span>
<div class="abs" id="dialog">
<div class="abs" id="titlebar"></div>
<div class="tl" style="left:6px;top:2.1px;width:11px;height:11px;background:#fc5753;border:0.5px solid #df4744"></div>
<div class="tl" style="left:23.8px;top:2.1px;width:11px;height:11px;background:#dcdcdc;border:0.7px solid #c3c3c3"></div>
<div class="tl" style="left:41.9px;top:2.1px;width:11px;height:11px;background:#dcdcdc;border:0.7px solid #c3c3c3"></div>
<div class="abs" id="ring"></div>
<div class="abs" id="table">
  <div class="abs" id="thead"></div>
  <div class="abs" style="left:0;top:16px;width:1158px;height:1px;background:#e0e0e0"></div>
  <div class="abs" style="left:0;top:17px;width:1158px;height:1px;background:#b9b9b9"></div>
  <div class="grow" style="top:18px;height:19px;border-top:none"></div>
  <div class="abs" style="left:20px;top:37px;width:1138px;height:1px;background:#ececec"></div>
  <div class="grow" style="top:57px"></div>
  <div class="grow" style="top:77px;border-bottom:1px solid #c0c0c0"></div>
  <!-- header col separators -->
  <div class="vl" style="left:229px;top:2px;height:12px;background:#dadada"></div>
  <div class="vl" style="left:349px;top:2px;height:12px;background:#dadada"></div>
  <div class="vl" style="left:419px;top:2px;height:12px;background:#dadada"></div>
  <div class="vl" style="left:809px;top:2px;height:12px;background:#dadada"></div>
  <div class="vl" style="left:989px;top:2px;height:12px;background:#dadada"></div>
  <!-- body col separators -->
  <div class="vl" style="left:230px;top:18px;height:79px;background:#b3b3b3"></div>
  <div class="vl" style="left:350px;top:18px;height:79px;background:#b3b3b3"></div>
  <div class="vl" style="left:420px;top:18px;height:79px;background:#b3b3b3"></div>
  <div class="vl" style="left:810px;top:18px;height:79px;background:#b3b3b3"></div>
  <div class="vl" style="left:990px;top:18px;height:79px;background:#b3b3b3"></div>
  <div class="vl" style="left:230px;top:37px;height:20px;background:#e3e3e3"></div>
  <div class="vl" style="left:350px;top:37px;height:20px;background:#e3e3e3"></div>
  <div class="vl" style="left:420px;top:37px;height:20px;background:#e3e3e3"></div>
  <div class="vl" style="left:810px;top:37px;height:20px;background:#e3e3e3"></div>
  <div class="vl" style="left:990px;top:37px;height:20px;background:#e3e3e3"></div>
  <div class="vl" style="left:40.5px;top:37px;height:20px;background:#dcdcdc"></div>
  <!-- scrollbar -->
  <div class="abs" style="left:0;top:349px;width:1158px;height:12px;background:#c9c9c9;border-top:1px solid #bdbdbd;box-sizing:border-box"></div>
  <div class="abs" style="left:14px;top:350px;width:1118px;height:10px;background:#bbbbbb;border:1px solid #9b9b9b;border-radius:2.5px;box-sizing:border-box"></div>
  <svg class="abs" style="left:0;top:0" width="1158" height="361">
    <polygon points="6.2,24.2 15,24.2 10.6,31.2" fill="#858585"/>
    <polygon points="7.6,83.4 14.6,87.7 7.6,92" fill="#858585"/>
    <path d="M211,66 H221 M216,61 V71" stroke="#7c7c7c" stroke-width="1.3"/>
    <path transform="translate(50.4,46.6)" d="M0,-8.6 L2.3,-2.9 L8.4,-2.5 L3.7,1.5 L5.2,7.5 L0,4.2 L-5.2,7.5 L-3.7,1.5 L-8.4,-2.5 L-2.3,-2.9 Z" fill="#fdb32c" stroke="#fdb32c" stroke-width="0.8" stroke-linejoin="round"/>
    <polygon points="9.2,351 4.5,355 9.2,359" fill="#8b8b8b"/>
    <polygon points="1148.6,351 1153.6,355 1148.6,359" fill="#8b8b8b"/>
  </svg>
</div>
<div class="abs" id="ok"></div>
<svg class="abs" style="left:1186px;top:452px" width="14" height="14"><path d="M12.8,2.4 L2.4,12.8 M12.8,6.4 L6.4,12.8 M12.8,10.2 L10.2,12.8" stroke="#a6a6a6" stroke-width="1.3" fill="none"/><path d="M12.8,4 L4,12.8 M12.8,8 L8,12.8" stroke="#f8f8f8" stroke-width="0.8" fill="none"/></svg>
</div>
<span class="t" style="left:683.50px;top:134.59px;font-size:11px;font-weight:normal;color:#4a4a4a;transform:scaleX(1.0200);">Parameters</span>
<span class="t" style="left:138.60px;top:171.81px;font-size:10.5px;font-weight:normal;color:#111;transform:scaleX(1.0763);-webkit-text-stroke:0.35px #111">Parameter</span>
<span class="t" style="left:368.50px;top:171.81px;font-size:10.5px;font-weight:normal;color:#111;transform:scaleX(1.0331);-webkit-text-stroke:0.35px #111">Name</span>
<span class="t" style="left:488.60px;top:171.81px;font-size:10.5px;font-weight:normal;color:#111;transform:scaleX(1.0717);-webkit-text-stroke:0.35px #111">Unit</span>
<span class="t" style="left:558.50px;top:171.81px;font-size:10.5px;font-weight:normal;color:#111;transform:scaleX(1.0844);-webkit-text-stroke:0.35px #111">Expression</span>
<span class="t" style="left:948.00px;top:171.81px;font-size:10.5px;font-weight:normal;color:#111;transform:scaleX(1.1053);-webkit-text-stroke:0.35px #111">Value</span>
<span class="t" style="left:1128.40px;top:171.81px;font-size:10.5px;font-weight:normal;color:#111;transform:scaleX(1.0968);-webkit-text-stroke:0.35px #111">Comments</span>
<span class="t" style="left:159.70px;top:191.53px;font-size:11.9px;font-weight:bold;color:#000;transform:scaleX(1.1060);">Favorites</span>
<span class="t" style="left:159.70px;top:231.93px;font-size:11.9px;font-weight:bold;color:#000;transform:scaleX(1.1315);">User Parameters</span>
<span class="t" style="left:159.70px;top:251.63px;font-size:11.9px;font-weight:bold;color:#000;transform:scaleX(1.1359);">Model Parameters</span>
<span class="t" style="left:201.60px;top:211.02px;font-size:12.5px;font-weight:normal;color:#000;transform:scaleX(1.1223);-webkit-text-stroke:0.25px #000">20X20 - T-slot - alumini...</span>
<span class="t" style="left:368.71px;top:211.02px;font-size:12.5px;font-weight:normal;color:#000;transform:scaleX(1.0917);-webkit-text-stroke:0.25px #000">Length</span>
<span class="t" style="left:489.40px;top:211.02px;font-size:12.5px;font-weight:normal;color:#000;transform:scaleX(1.0680);-webkit-text-stroke:0.25px #000">mm</span>
<span class="t" style="left:559.40px;top:211.02px;font-size:12.5px;font-weight:normal;color:#000;transform:scaleX(1.0572);-webkit-text-stroke:0.25px #000">100 mm</span>
<span class="t" style="left:948.80px;top:211.02px;font-size:12.5px;font-weight:normal;color:#000;transform:scaleX(1.0972);-webkit-text-stroke:0.25px #000">100.00</span>
<span class="t" style="left:1240.30px;top:553.56px;font-size:12.8px;font-weight:normal;color:#fff;transform:scaleX(0.9655);-webkit-text-stroke:0.3px #fff">OK</span>
</body></html>
